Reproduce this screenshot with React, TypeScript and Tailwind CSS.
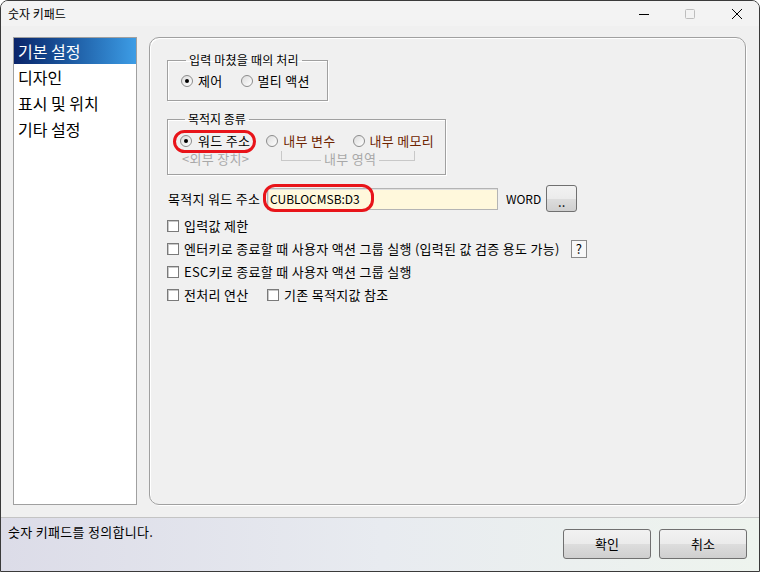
import React from 'react';

const FONT = "font-['Noto_Sans_CJK_KR',sans-serif]";

function Radio({ checked }: { checked?: boolean }) {
  return (
    <span className="flex h-[12px] w-[12px] shrink-0 items-center justify-center rounded-full border border-[#8c8c8c] bg-gradient-to-br from-[#dcdcdc] to-white">
      {checked && <span className="h-[4px] w-[4px] rounded-full bg-black" />}
    </span>
  );
}

function Check() {
  return <span className="h-[12px] w-[12px] shrink-0 border border-[#7a7a7a] bg-white shadow-[inset_1px_1px_0_#c8c8c8]" />;
}

function CheckRow({ label, extra }: { label: string; extra?: React.ReactNode }) {
  return (
    <div className="flex h-[18px] items-center">
      <Check />
      <span className="ml-[5px] tracking-[0.3px]">{label}</span>
      {extra}
    </div>
  );
}

function WinButton({ children, className = '' }: { children: React.ReactNode; className?: string }) {
  return (
    <button className={`flex items-center justify-center rounded-[3px] border border-[#707070] bg-[linear-gradient(#f2f2f2_0%,#ebebeb_50%,#dddddd_51%,#cfcfcf_100%)] text-[13px] text-black ${className}`}>
      {children}
    </button>
  );
}

export default function App() {
  return (
    <div className={`${FONT} h-[572px] w-[760px] overflow-hidden rounded-t-[8px] border border-[#3a3a3a] bg-[#f0f0f0] text-[13px] leading-[16px] text-black`}>
      {/* Title bar */}
      <div className="flex h-[25px] items-center bg-[#f3f3f3]">
        <span className="ml-[7px] text-[12px]">숫자 키패드</span>
        <div className="ml-auto flex items-center">
          <svg width="12" height="12" viewBox="0 0 12 12" className="mr-[34px]">
            <line x1="1" y1="6.5" x2="11" y2="6.5" stroke="#000" strokeWidth="1" />
          </svg>
          <svg width="12" height="12" viewBox="0 0 12 12" className="mr-[35px]">
            <rect x="1.5" y="1.5" width="9" height="9" rx="1" fill="none" stroke="#bdbdbd" strokeWidth="1" />
          </svg>
          <svg width="12" height="12" viewBox="0 0 12 12" className="mr-[16px]">
            <path d="M1 1 L11 11 M11 1 L1 11" stroke="#000" strokeWidth="1" />
          </svg>
        </div>
      </div>

      {/* Body */}
      <div className="flex h-[491px] items-start pl-[12px] pt-[11px]">
        {/* Left list */}
        <div className="h-[468px] w-[124px] border border-[#a0a0a0] bg-white text-[16px] leading-[26px]">
          <div className="bg-gradient-to-r from-[#0a246a] to-[#3d9de6] pl-[4px] text-white">기본 설정</div>
          <div className="pl-[4px]">디자인</div>
          <div className="pl-[4px]">표시 및 위치</div>
          <div className="pl-[4px]">기타 설정</div>
        </div>

        {/* Main panel */}
        <div className="ml-[12px] h-[468px] w-[597px] rounded-[10px] border border-[#a0a0a0] pl-[17px] pt-[14px] shadow-[inset_1px_1px_0_#ffffff,1px_1px_0_#ffffff]">
          <fieldset className="w-[161px] border border-[#a0a0a0] pb-[11px] pl-[13px] shadow-[inset_1px_1px_0_#fff,1px_1px_0_#fff]">
            <legend className="ml-[5px] px-[3px] text-[12px] leading-[16px] tracking-[0.2px]">입력 마쳤을 때의 처리</legend>
            <div className="mt-[5px] flex h-[16px] items-center tracking-[0.3px]">
              <Radio checked />
              <span className="ml-[5px]">제어</span>
              <span className="ml-[18px]"><Radio /></span>
              <span className="ml-[5px]">멀티 액션</span>
            </div>
          </fieldset>

          <fieldset className="mt-[10px] w-[279px] border border-[#a0a0a0] pb-[7px] pl-[12px] shadow-[inset_1px_1px_0_#fff,1px_1px_0_#fff]">
            <legend className="ml-[5px] px-[3px] text-[12px] leading-[16px]">목적지 종류</legend>
            <div className="relative mt-[6px] flex h-[16px] items-center tracking-[0.3px]">
              <span className="absolute left-[-7px] top-[-3px] h-[23px] w-[83px] rounded-full border-[3px] border-[#e8141a]" />
              <Radio checked />
              <span className="ml-[6px]">워드 주소</span>
              <span className="ml-[16px]"><Radio /></span>
              <span className="ml-[5px] text-[#6e2400]">내부 변수</span>
              <span className="ml-[17px]"><Radio /></span>
              <span className="ml-[5px] text-[#6e2400]">내부 메모리</span>
            </div>
            <div className="mt-[2px] flex h-[16px] items-center tracking-[0.3px] text-[#a8a8a8]">
              <span className="ml-[2px] w-[99px]">&lt;외부 장치&gt;</span>
              <span className="mb-[6px] h-[10px] w-[40px] self-end border-b border-l border-[#c8c8c8]" />
              <span className="px-[3px]">내부 영역</span>
              <span className="mb-[6px] h-[10px] w-[36px] self-end border-b border-r border-[#c8c8c8]" />
            </div>
          </fieldset>

          <div className="mt-[10px] flex h-[27px] items-center">
            <span className="w-[100px] pl-[1px] tracking-[0.3px]">목적지 워드 주소</span>
            <div className="relative">
              <div className="flex h-[22px] w-[231px] items-center border border-[#b4b4b4] bg-[#fff8dc] pl-[2px] text-[12px] shadow-[inset_1px_1px_0_#e0e0e0]">
                CUBLOCMSB:D3
              </div>
              <span className="absolute left-[-4px] top-[-4px] h-[28px] w-[111px] rounded-[12px] border-[3px] border-[#e8141a]" />
            </div>
            <span className="ml-[8px] text-[12px]">WORD</span>
            <WinButton className="ml-[5px] h-[27px] w-[31px] pt-[6px]">..</WinButton>
          </div>

          <div className="mt-[5px] flex flex-col gap-[5px]">
            <CheckRow label="입력값 제한" />
            <CheckRow
              label="엔터키로 종료할 때 사용자 액션 그룹 실행 (입력된 값 검증 용도 가능)"
              extra={
                <span className="ml-[11px] flex h-[18px] w-[16px] items-center justify-center border border-[#8a8a8a] bg-[#f8f8f8] text-[13px]">?</span>
              }
            />
            <CheckRow label="ESC키로 종료할 때 사용자 액션 그룹 실행" />
            <div className="flex h-[18px] items-center">
              <Check />
              <span className="ml-[5px] w-[83px] tracking-[0.3px]">전처리 연산</span>
              <Check />
              <span className="ml-[5px] tracking-[0.3px]">기존 목적지값 참조</span>
            </div>
          </div>
        </div>
      </div>

      {/* Footer */}
      <div className="flex h-[54px] items-start border-t border-[#c4c4c4] bg-gradient-to-r from-[#dcdce8] via-[#e8ebf0] to-[#eef4ee]">
        <span className="ml-[7px] mt-[6px] tracking-[0.3px]">숫자 키패드를 정의합니다.</span>
        <div className="ml-auto mr-[12px] mt-[11px] flex gap-[8px]">
          <WinButton className="h-[30px] w-[88px]">확인</WinButton>
          <WinButton className="h-[30px] w-[88px]">취소</WinButton>
        </div>
      </div>
    </div>
  );
}
